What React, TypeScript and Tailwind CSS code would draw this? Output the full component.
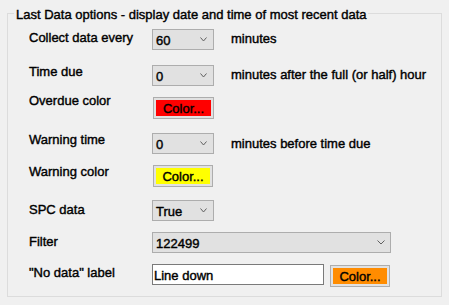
import React from "react";

const font = "font-['Liberation_Sans',Arial,sans-serif] text-[13px] leading-[15px] text-black";

function Chevron({ w = 7 }: { w?: number }) {
  return (
    <svg width={w} height={5} viewBox={`0 0 ${w} 5`} className="shrink-0">
      <polyline points={`0.5,0.5 ${w / 2},${4} ${w - 0.5},0.5`} fill="none" stroke="#606060" strokeWidth="1" />
    </svg>
  );
}

function Combo({ value, w = "w-[62px]" }: { value: string; w?: string }) {
  return (
    <div className={`${w} h-[21px] border border-[#adadad] bg-[#e1e1e1] flex items-center justify-between pl-[3px] pr-[6px]`}>
      <span className="pt-[1px]">{value}</span>
      <Chevron />
    </div>
  );
}

function ColorBtn({ color, w = "w-[61px]" }: { color: string; w?: string }) {
  return (
    <div className={`${w} h-[22px] border border-[#adadad] bg-[#e1e1e1] p-[2px] flex`}>
      <div className={`flex-1 ${color} flex items-center justify-center`}>Color...</div>
    </div>
  );
}

export default function App() {
  return (
    <div className={`w-[449px] h-[305px] bg-[#f0f0f0] pt-[13px] pl-[7px] ${font} [-webkit-text-stroke:0.4px_#000]`}>
      <div className="relative w-[435px] h-[284px] border border-[#dcdcdc] pt-[15px] pl-[21px] flex flex-col">
        <span className="absolute top-[-7px] left-[6px] px-[2px] bg-[#f0f0f0] whitespace-nowrap">
          Last Data options - display date and time of most recent data
        </span>

        <div className="h-[36px] flex items-start">
          <div className="w-[123px] mt-[1px]">Collect data every</div>
          <Combo value="60" />
          <div className="ml-[17px] mt-[2px]">minutes</div>
        </div>

        <div className="h-[32px] flex items-start">
          <div className="w-[123px] -mt-[1px]">Time due</div>
          <Combo value="0" />
          <div className="ml-[17px] mt-[2px]">minutes after the full (or half) hour</div>
        </div>

        <div className="h-[36px] flex items-start">
          <div className="w-[124px] -mt-[4px]">Overdue color</div>
          <ColorBtn color="bg-[#ff0000]" />
        </div>

        <div className="h-[32px] flex items-start">
          <div className="w-[123px] -mt-[1px]">Warning time</div>
          <Combo value="0" />
          <div className="ml-[17px] mt-[3px]">minutes before time due</div>
        </div>

        <div className="h-[35px] flex items-start">
          <div className="w-[124px] -mt-[1px]">Warning color</div>
          <ColorBtn color="bg-[#ffff00]" w="w-[60px]" />
        </div>

        <div className="h-[32px] flex items-start">
          <div className="w-[123px] mt-[2px]">SPC data</div>
          <Combo value="True" />
        </div>

        <div className="h-[32px] flex items-start">
          <div className="w-[123px] mt-[2px]">Filter</div>
          <div className="w-[239px] h-[21px] border border-[#adadad] bg-[#e1e1e1] flex items-center justify-between pl-[3px] pr-[5px]">
            <span className="pt-[1px]">122499</span>
            <Chevron w={8} />
          </div>
        </div>

        <div className="h-[22px] flex items-start">
          <div className="w-[123px] mt-[1px]">"No data" label</div>
          <div className="w-[172px] h-[21px] border border-[#7a7a7a] bg-white pl-[1px] flex items-center">
            <span className="pt-[1px]">Line down</span>
          </div>
          <div className="ml-[6px] mt-[1px]">
            <ColorBtn color="bg-[#ff8c00]" w="w-[60px]" />
          </div>
        </div>
      </div>
    </div>
  );
}
